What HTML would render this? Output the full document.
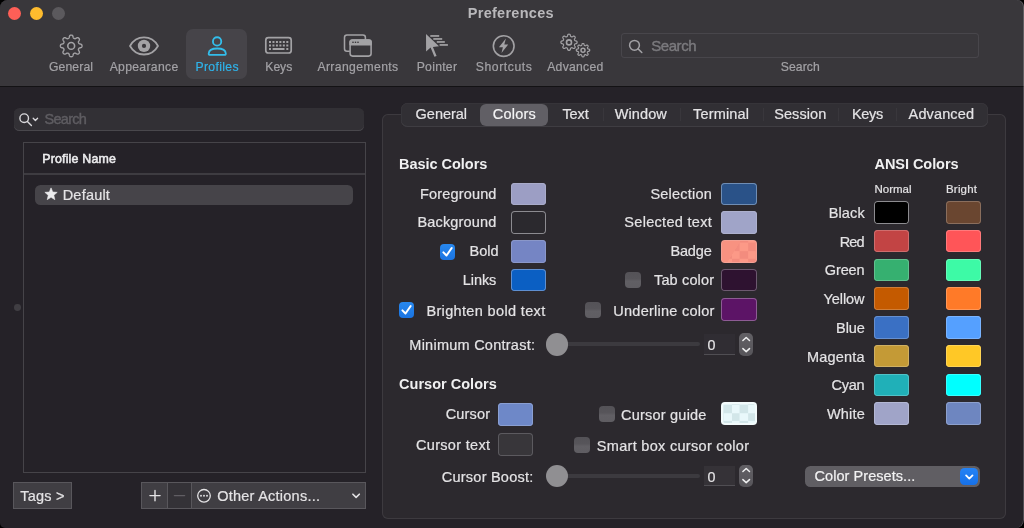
<!DOCTYPE html>
<html lang="en"><head><meta charset="utf-8"><title>Preferences</title>
<style>
html,body{margin:0;padding:0;background:#000;}
body{width:1024px;height:528px;overflow:hidden;position:relative;font-family:"Liberation Sans",sans-serif;}
.abs,.t,.sw,.cb,.bx{position:absolute;}
.t{white-space:pre;-webkit-text-stroke:0.2px currentColor;}
#txt{position:absolute;left:0;top:0;width:1024px;height:528px;will-change:transform;}
#win{position:absolute;left:0;top:0;width:1024px;height:528px;background:#252228;border-radius:7.5px 6.5px 8px 5px;overflow:hidden;}
#win::after{content:"";position:absolute;left:-3px;top:0;right:0;bottom:0;border-radius:7.5px 6.5px 8px 5px;box-shadow:inset -1px 0 0 0 rgba(255,255,255,0.2);pointer-events:none;}
#toolbar{position:absolute;left:0;top:0;width:1024px;height:85.5px;background:#39373b;border-bottom:1.2px solid #131214;}
.sw{border-radius:3.8px;}
.cb{width:15.6px;height:15.6px;border-radius:4px;background:linear-gradient(#545257 0%,#57555a 42%,#615f64 58%,#5f5d62 100%);}
.cb.on{background:linear-gradient(#2888ee,#1a74e2);box-shadow:none;}
.cb svg{display:block}
.knob{width:22.4px;height:22.4px;border-radius:50%;background:#908f92;}
.track{height:4.8px;border-radius:2.4px;background:#3c3a3f;}
.field{background:#302d33;box-shadow:inset 0 -1px 0 #504e53;}
.step{width:14.1px;height:22.2px;border-radius:5px;background:linear-gradient(#626065,#57555a);}
</style></head><body>
<div id="win">
<div id="toolbar"></div>
<div class="bx" style="left:7.8px;top:6.5px;width:13.4px;height:13.4px;border-radius:50%;background:#fe5f57"></div>
<div class="bx" style="left:29.9px;top:6.5px;width:13.4px;height:13.4px;border-radius:50%;background:#febc2e"></div>
<div class="bx" style="left:52px;top:6.5px;width:13.4px;height:13.4px;border-radius:50%;background:#5b595d"></div>
<div class="bx" style="left:186.2px;top:28.6px;width:60.6px;height:50.2px;border-radius:7px;background:#464449"></div>
<div class="bx" style="left:621.4px;top:33.0px;width:358px;height:24.9px;border-radius:3.5px;background:#39373b;box-shadow:inset 0 0 0 1px #48464b"></div>

<svg class="abs" style="left:0;top:0" width="1024" height="90" viewBox="0 0 1024 90" fill="none" stroke="#a3a2a5" stroke-width="1.55" stroke-linejoin="round" stroke-linecap="round">
  <!-- general gear -->
  <path d="M82.00,45.90 L81.99,46.09 L81.98,46.28 L81.95,46.46 L81.90,46.65 L81.84,46.83 L81.74,47.01 L81.61,47.18 L81.42,47.34 L81.17,47.48 L80.86,47.60 L80.51,47.71 L80.15,47.80 L79.81,47.89 L79.53,47.98 L79.31,48.07 L79.13,48.17 L79.00,48.28 L78.90,48.40 L78.81,48.52 L78.74,48.64 L78.68,48.77 L78.62,48.90 L78.56,49.03 L78.52,49.16 L78.47,49.29 L78.44,49.43 L78.41,49.57 L78.40,49.73 L78.42,49.90 L78.47,50.10 L78.56,50.32 L78.70,50.58 L78.87,50.88 L79.06,51.20 L79.24,51.53 L79.37,51.83 L79.44,52.11 L79.46,52.35 L79.44,52.57 L79.38,52.76 L79.30,52.94 L79.20,53.10 L79.09,53.26 L78.97,53.40 L78.84,53.54 L78.70,53.67 L78.56,53.79 L78.40,53.90 L78.24,54.00 L78.06,54.08 L77.87,54.14 L77.65,54.16 L77.41,54.14 L77.13,54.07 L76.83,53.94 L76.50,53.76 L76.18,53.57 L75.88,53.40 L75.62,53.26 L75.40,53.17 L75.20,53.12 L75.03,53.10 L74.87,53.11 L74.73,53.14 L74.59,53.17 L74.46,53.22 L74.33,53.26 L74.20,53.32 L74.07,53.38 L73.94,53.44 L73.82,53.51 L73.70,53.60 L73.58,53.70 L73.47,53.83 L73.37,54.01 L73.28,54.23 L73.19,54.51 L73.10,54.85 L73.01,55.21 L72.90,55.56 L72.78,55.87 L72.64,56.12 L72.48,56.31 L72.31,56.44 L72.13,56.54 L71.95,56.60 L71.76,56.65 L71.58,56.68 L71.39,56.69 L71.20,56.70 L71.01,56.69 L70.82,56.68 L70.64,56.65 L70.45,56.60 L70.27,56.54 L70.09,56.44 L69.92,56.31 L69.76,56.12 L69.62,55.87 L69.50,55.56 L69.39,55.21 L69.30,54.85 L69.21,54.51 L69.12,54.23 L69.03,54.01 L68.93,53.83 L68.82,53.70 L68.70,53.60 L68.58,53.51 L68.46,53.44 L68.33,53.38 L68.20,53.32 L68.07,53.26 L67.94,53.22 L67.81,53.17 L67.67,53.14 L67.53,53.11 L67.37,53.10 L67.20,53.12 L67.00,53.17 L66.78,53.26 L66.52,53.40 L66.22,53.57 L65.90,53.76 L65.57,53.94 L65.27,54.07 L64.99,54.14 L64.75,54.16 L64.53,54.14 L64.34,54.08 L64.16,54.00 L64.00,53.90 L63.84,53.79 L63.70,53.67 L63.56,53.54 L63.43,53.40 L63.31,53.26 L63.20,53.10 L63.10,52.94 L63.02,52.76 L62.96,52.57 L62.94,52.35 L62.96,52.11 L63.03,51.83 L63.16,51.53 L63.34,51.20 L63.53,50.88 L63.70,50.58 L63.84,50.32 L63.93,50.10 L63.98,49.90 L64.00,49.73 L63.99,49.57 L63.96,49.43 L63.93,49.29 L63.88,49.16 L63.84,49.03 L63.78,48.90 L63.72,48.77 L63.66,48.64 L63.59,48.52 L63.50,48.40 L63.40,48.28 L63.27,48.17 L63.09,48.07 L62.87,47.98 L62.59,47.89 L62.25,47.80 L61.89,47.71 L61.54,47.60 L61.23,47.48 L60.98,47.34 L60.79,47.18 L60.66,47.01 L60.56,46.83 L60.50,46.65 L60.45,46.46 L60.42,46.28 L60.41,46.09 L60.40,45.90 L60.41,45.71 L60.42,45.52 L60.45,45.34 L60.50,45.15 L60.56,44.97 L60.66,44.79 L60.79,44.62 L60.98,44.46 L61.23,44.32 L61.54,44.20 L61.89,44.09 L62.25,44.00 L62.59,43.91 L62.87,43.82 L63.09,43.73 L63.27,43.63 L63.40,43.52 L63.50,43.40 L63.59,43.28 L63.66,43.16 L63.72,43.03 L63.78,42.90 L63.84,42.77 L63.88,42.64 L63.93,42.51 L63.96,42.37 L63.99,42.23 L64.00,42.07 L63.98,41.90 L63.93,41.70 L63.84,41.48 L63.70,41.22 L63.53,40.92 L63.34,40.60 L63.16,40.27 L63.03,39.97 L62.96,39.69 L62.94,39.45 L62.96,39.23 L63.02,39.04 L63.10,38.86 L63.20,38.70 L63.31,38.54 L63.43,38.40 L63.56,38.26 L63.70,38.13 L63.84,38.01 L64.00,37.90 L64.16,37.80 L64.34,37.72 L64.53,37.66 L64.75,37.64 L64.99,37.66 L65.27,37.73 L65.57,37.86 L65.90,38.04 L66.22,38.23 L66.52,38.40 L66.78,38.54 L67.00,38.63 L67.20,38.68 L67.37,38.70 L67.53,38.69 L67.67,38.66 L67.81,38.63 L67.94,38.58 L68.07,38.54 L68.20,38.48 L68.33,38.42 L68.46,38.36 L68.58,38.29 L68.70,38.20 L68.82,38.10 L68.93,37.97 L69.03,37.79 L69.12,37.57 L69.21,37.29 L69.30,36.95 L69.39,36.59 L69.50,36.24 L69.62,35.93 L69.76,35.68 L69.92,35.49 L70.09,35.36 L70.27,35.26 L70.45,35.20 L70.64,35.15 L70.82,35.12 L71.01,35.11 L71.20,35.10 L71.39,35.11 L71.58,35.12 L71.76,35.15 L71.95,35.20 L72.13,35.26 L72.31,35.36 L72.48,35.49 L72.64,35.68 L72.78,35.93 L72.90,36.24 L73.01,36.59 L73.10,36.95 L73.19,37.29 L73.28,37.57 L73.37,37.79 L73.47,37.97 L73.58,38.10 L73.70,38.20 L73.82,38.29 L73.94,38.36 L74.07,38.42 L74.20,38.48 L74.33,38.54 L74.46,38.58 L74.59,38.63 L74.73,38.66 L74.87,38.69 L75.03,38.70 L75.20,38.68 L75.40,38.63 L75.62,38.54 L75.88,38.40 L76.18,38.23 L76.50,38.04 L76.83,37.86 L77.13,37.73 L77.41,37.66 L77.65,37.64 L77.87,37.66 L78.06,37.72 L78.24,37.80 L78.40,37.90 L78.56,38.01 L78.70,38.13 L78.84,38.26 L78.97,38.40 L79.09,38.54 L79.20,38.70 L79.30,38.86 L79.38,39.04 L79.44,39.23 L79.46,39.45 L79.44,39.69 L79.37,39.97 L79.24,40.27 L79.06,40.60 L78.87,40.92 L78.70,41.22 L78.56,41.48 L78.47,41.70 L78.42,41.90 L78.40,42.07 L78.41,42.23 L78.44,42.37 L78.47,42.51 L78.52,42.64 L78.56,42.77 L78.62,42.90 L78.68,43.03 L78.74,43.16 L78.81,43.28 L78.90,43.40 L79.00,43.52 L79.13,43.63 L79.31,43.73 L79.53,43.82 L79.81,43.91 L80.15,44.00 L80.51,44.09 L80.86,44.20 L81.17,44.32 L81.42,44.46 L81.61,44.62 L81.74,44.79 L81.84,44.97 L81.90,45.15 L81.95,45.34 L81.98,45.52 L81.99,45.71Z" stroke-width="1.4"/>
  <circle cx="71.2" cy="45.9" r="3.4" stroke-width="1.6"/>
  <!-- eye -->
  <path d="M130 45.95 C133 40.6 138.4 37.4 144 37.4 C149.6 37.4 155 40.6 158 45.95 C155 51.3 149.6 54.5 144 54.5 C138.4 54.5 133 51.3 130 45.95Z" stroke-width="1.8"/>
  <circle cx="144" cy="45.9" r="6.2" fill="#a3a2a5" stroke="none"/>
  <circle cx="144" cy="45.9" r="2.1" fill="#39373b" stroke="none"/>
  <!-- person -->
  <g stroke="#33bdea" stroke-width="1.85">
    <circle cx="217.1" cy="41.4" r="4.15"/>
    <path d="M208.7 53.5 C208.9 50.4 212.5 48.5 217.25 48.5 C222 48.5 225.6 50.4 225.8 53.5 C225.85 54.4 225.4 54.9 224.5 54.9 L210 54.9 C209.1 54.9 208.65 54.4 208.7 53.5Z"/>
  </g>
  <!-- keyboard -->
  <rect x="265.8" y="37.6" width="25.4" height="15.4" rx="2.6" stroke-width="1.7"/>
  <g fill="#a3a2a5" stroke="none">
    <rect x="269.00" y="41.0" width="2" height="2"/><rect x="272.46" y="41.0" width="2" height="2"/><rect x="275.92" y="41.0" width="2" height="2"/><rect x="279.38" y="41.0" width="2" height="2"/><rect x="282.84" y="41.0" width="2" height="2"/><rect x="286.30" y="41.0" width="2" height="2"/>
    <rect x="269.00" y="44.5" width="2" height="2"/><rect x="272.46" y="44.5" width="2" height="2"/><rect x="275.92" y="44.5" width="2" height="2"/><rect x="279.38" y="44.5" width="2" height="2"/><rect x="282.84" y="44.5" width="2" height="2"/><rect x="286.30" y="44.5" width="2" height="2"/>
    <rect x="269.0" y="48.0" width="2" height="2"/><rect x="272.6" y="48.0" width="11.9" height="2"/><rect x="286.3" y="48.0" width="2" height="2"/>
  </g>
  <!-- arrangements -->
  <path d="M349.3 51.3 L347 51.3 C345.4 51.3 344.5 50.4 344.5 48.8 L344.5 37.4 C344.5 35.8 345.4 34.9 347 34.9 L362.9 34.9 C364.5 34.9 365.4 35.8 365.4 37.4 L365.4 39.3"/>
  <rect x="350.1" y="40.0" width="21" height="16.1" rx="2.5"/>
  <path d="M350.1 44.6 L350.1 42.5 C350.1 40.9 351 40 352.6 40 L368.6 40 C370.2 40 371.1 40.9 371.1 42.5 L371.1 44.6Z" fill="#a3a2a5"/>
  <g fill="#39373b" stroke="none"><rect x="352.3" y="41.6" width="1.4" height="1.4"/><rect x="354.8" y="41.6" width="1.4" height="1.4"/><rect x="357.3" y="41.6" width="1.4" height="1.4"/></g>
  <!-- pointer -->
  <g fill="#a3a2a5" stroke="none">
    <path d="M426.0 33.9 L426.1 51.4 L430.6 47.6 L434.4 56.8 L436.6 55.9 L432.9 46.9 L439.0 46.3 Z"/>
    <rect x="430.3" y="35.1" width="8.9" height="1.7"/>
    <rect x="433.3" y="38.1" width="8.9" height="1.7"/>
    <rect x="436.8" y="41.1" width="8.0" height="1.7"/>
    <rect x="439.6" y="44.1" width="8.3" height="1.7"/>
  </g>
  <!-- shortcuts -->
  <circle cx="503.7" cy="46.05" r="10.35" stroke-width="1.6"/>
  <path d="M505.9 38.5 L498.9 47.3 L502.9 47.3 L501.5 53.0 L508.2 44.5 L504.3 44.5 Z" fill="#a3a2a5" stroke="none"/>
  <!-- advanced gears -->
  <g stroke-width="1.2">
  <path d="M577.10,42.30 L577.10,42.44 L577.08,42.58 L577.06,42.72 L577.03,42.86 L576.98,43.00 L576.91,43.13 L576.80,43.26 L576.66,43.38 L576.48,43.48 L576.25,43.58 L575.98,43.66 L575.71,43.73 L575.46,43.79 L575.25,43.86 L575.08,43.93 L574.95,44.01 L574.85,44.09 L574.77,44.18 L574.71,44.27 L574.66,44.36 L574.61,44.45 L574.56,44.55 L574.52,44.64 L574.49,44.74 L574.45,44.84 L574.43,44.95 L574.41,45.06 L574.40,45.17 L574.41,45.30 L574.45,45.45 L574.52,45.62 L574.62,45.81 L574.75,46.04 L574.90,46.28 L575.03,46.52 L575.13,46.75 L575.18,46.96 L575.20,47.14 L575.18,47.30 L575.13,47.45 L575.07,47.58 L575.00,47.70 L574.92,47.82 L574.82,47.92 L574.73,48.03 L574.62,48.12 L574.52,48.22 L574.40,48.30 L574.28,48.37 L574.15,48.43 L574.00,48.48 L573.84,48.50 L573.66,48.48 L573.45,48.43 L573.22,48.33 L572.98,48.20 L572.74,48.05 L572.51,47.92 L572.32,47.82 L572.15,47.75 L572.00,47.71 L571.87,47.70 L571.76,47.71 L571.65,47.73 L571.54,47.75 L571.44,47.79 L571.34,47.82 L571.25,47.86 L571.15,47.91 L571.06,47.96 L570.97,48.01 L570.88,48.07 L570.79,48.15 L570.71,48.25 L570.63,48.38 L570.56,48.55 L570.49,48.76 L570.43,49.01 L570.36,49.28 L570.28,49.55 L570.18,49.78 L570.08,49.96 L569.96,50.10 L569.83,50.21 L569.70,50.28 L569.56,50.33 L569.42,50.36 L569.28,50.38 L569.14,50.40 L569.00,50.40 L568.86,50.40 L568.72,50.38 L568.58,50.36 L568.44,50.33 L568.30,50.28 L568.17,50.21 L568.04,50.10 L567.92,49.96 L567.82,49.78 L567.72,49.55 L567.64,49.28 L567.57,49.01 L567.51,48.76 L567.44,48.55 L567.37,48.38 L567.29,48.25 L567.21,48.15 L567.12,48.07 L567.03,48.01 L566.94,47.96 L566.85,47.91 L566.75,47.86 L566.66,47.82 L566.56,47.79 L566.46,47.75 L566.35,47.73 L566.24,47.71 L566.13,47.70 L566.00,47.71 L565.85,47.75 L565.68,47.82 L565.49,47.92 L565.26,48.05 L565.02,48.20 L564.78,48.33 L564.55,48.43 L564.34,48.48 L564.16,48.50 L564.00,48.48 L563.85,48.43 L563.72,48.37 L563.60,48.30 L563.48,48.22 L563.38,48.12 L563.27,48.03 L563.18,47.92 L563.08,47.82 L563.00,47.70 L562.93,47.58 L562.87,47.45 L562.82,47.30 L562.80,47.14 L562.82,46.96 L562.87,46.75 L562.97,46.52 L563.10,46.28 L563.25,46.04 L563.38,45.81 L563.48,45.62 L563.55,45.45 L563.59,45.30 L563.60,45.17 L563.59,45.06 L563.57,44.95 L563.55,44.84 L563.51,44.74 L563.48,44.64 L563.44,44.55 L563.39,44.45 L563.34,44.36 L563.29,44.27 L563.23,44.18 L563.15,44.09 L563.05,44.01 L562.92,43.93 L562.75,43.86 L562.54,43.79 L562.29,43.73 L562.02,43.66 L561.75,43.58 L561.52,43.48 L561.34,43.38 L561.20,43.26 L561.09,43.13 L561.02,43.00 L560.97,42.86 L560.94,42.72 L560.92,42.58 L560.90,42.44 L560.90,42.30 L560.90,42.16 L560.92,42.02 L560.94,41.88 L560.97,41.74 L561.02,41.60 L561.09,41.47 L561.20,41.34 L561.34,41.22 L561.52,41.12 L561.75,41.02 L562.02,40.94 L562.29,40.87 L562.54,40.81 L562.75,40.74 L562.92,40.67 L563.05,40.59 L563.15,40.51 L563.23,40.42 L563.29,40.33 L563.34,40.24 L563.39,40.15 L563.44,40.05 L563.48,39.96 L563.51,39.86 L563.55,39.76 L563.57,39.65 L563.59,39.54 L563.60,39.43 L563.59,39.30 L563.55,39.15 L563.48,38.98 L563.38,38.79 L563.25,38.56 L563.10,38.32 L562.97,38.08 L562.87,37.85 L562.82,37.64 L562.80,37.46 L562.82,37.30 L562.87,37.15 L562.93,37.02 L563.00,36.90 L563.08,36.78 L563.18,36.68 L563.27,36.57 L563.38,36.48 L563.48,36.38 L563.60,36.30 L563.72,36.23 L563.85,36.17 L564.00,36.12 L564.16,36.10 L564.34,36.12 L564.55,36.17 L564.78,36.27 L565.02,36.40 L565.26,36.55 L565.49,36.68 L565.68,36.78 L565.85,36.85 L566.00,36.89 L566.13,36.90 L566.24,36.89 L566.35,36.87 L566.46,36.85 L566.56,36.81 L566.66,36.78 L566.75,36.74 L566.85,36.69 L566.94,36.64 L567.03,36.59 L567.12,36.53 L567.21,36.45 L567.29,36.35 L567.37,36.22 L567.44,36.05 L567.51,35.84 L567.57,35.59 L567.64,35.32 L567.72,35.05 L567.82,34.82 L567.92,34.64 L568.04,34.50 L568.17,34.39 L568.30,34.32 L568.44,34.27 L568.58,34.24 L568.72,34.22 L568.86,34.20 L569.00,34.20 L569.14,34.20 L569.28,34.22 L569.42,34.24 L569.56,34.27 L569.70,34.32 L569.83,34.39 L569.96,34.50 L570.08,34.64 L570.18,34.82 L570.28,35.05 L570.36,35.32 L570.43,35.59 L570.49,35.84 L570.56,36.05 L570.63,36.22 L570.71,36.35 L570.79,36.45 L570.88,36.53 L570.97,36.59 L571.06,36.64 L571.15,36.69 L571.25,36.74 L571.34,36.78 L571.44,36.81 L571.54,36.85 L571.65,36.87 L571.76,36.89 L571.87,36.90 L572.00,36.89 L572.15,36.85 L572.32,36.78 L572.51,36.68 L572.74,36.55 L572.98,36.40 L573.22,36.27 L573.45,36.17 L573.66,36.12 L573.84,36.10 L574.00,36.12 L574.15,36.17 L574.28,36.23 L574.40,36.30 L574.52,36.38 L574.62,36.48 L574.73,36.57 L574.82,36.68 L574.92,36.78 L575.00,36.90 L575.07,37.02 L575.13,37.15 L575.18,37.30 L575.20,37.46 L575.18,37.64 L575.13,37.85 L575.03,38.08 L574.90,38.32 L574.75,38.56 L574.62,38.79 L574.52,38.98 L574.45,39.15 L574.41,39.30 L574.40,39.43 L574.41,39.54 L574.43,39.65 L574.45,39.76 L574.49,39.86 L574.52,39.96 L574.56,40.05 L574.61,40.15 L574.66,40.24 L574.71,40.33 L574.77,40.42 L574.85,40.51 L574.95,40.59 L575.08,40.67 L575.25,40.74 L575.46,40.81 L575.71,40.87 L575.98,40.94 L576.25,41.02 L576.48,41.12 L576.66,41.22 L576.80,41.34 L576.91,41.47 L576.98,41.60 L577.03,41.74 L577.06,41.88 L577.08,42.02 L577.10,42.16Z"/><circle cx="569" cy="42.4" r="2.5" stroke-width="1.6"/>
  <path d="M589.70,50.20 L589.70,50.32 L589.69,50.43 L589.67,50.55 L589.64,50.66 L589.60,50.78 L589.54,50.89 L589.45,50.99 L589.33,51.09 L589.17,51.18 L588.97,51.25 L588.75,51.32 L588.51,51.37 L588.30,51.42 L588.12,51.48 L587.98,51.53 L587.87,51.60 L587.78,51.66 L587.72,51.73 L587.66,51.81 L587.62,51.88 L587.58,51.96 L587.54,52.04 L587.51,52.11 L587.48,52.20 L587.45,52.28 L587.43,52.36 L587.42,52.45 L587.42,52.55 L587.43,52.65 L587.46,52.78 L587.52,52.92 L587.61,53.08 L587.73,53.27 L587.85,53.47 L587.97,53.68 L588.05,53.87 L588.10,54.05 L588.12,54.20 L588.11,54.34 L588.07,54.46 L588.02,54.57 L587.96,54.67 L587.89,54.76 L587.82,54.85 L587.74,54.94 L587.65,55.02 L587.56,55.09 L587.47,55.16 L587.37,55.22 L587.26,55.27 L587.14,55.31 L587.00,55.32 L586.85,55.30 L586.67,55.25 L586.48,55.17 L586.27,55.05 L586.07,54.93 L585.88,54.81 L585.72,54.72 L585.58,54.66 L585.45,54.63 L585.35,54.62 L585.25,54.62 L585.16,54.63 L585.08,54.65 L585.00,54.68 L584.91,54.71 L584.84,54.74 L584.76,54.78 L584.68,54.82 L584.61,54.86 L584.53,54.92 L584.46,54.98 L584.40,55.07 L584.33,55.18 L584.28,55.32 L584.22,55.50 L584.17,55.71 L584.12,55.95 L584.05,56.17 L583.98,56.37 L583.89,56.53 L583.79,56.65 L583.69,56.74 L583.58,56.80 L583.46,56.84 L583.35,56.87 L583.23,56.89 L583.12,56.90 L583.00,56.90 L582.88,56.90 L582.77,56.89 L582.65,56.87 L582.54,56.84 L582.42,56.80 L582.31,56.74 L582.21,56.65 L582.11,56.53 L582.02,56.37 L581.95,56.17 L581.88,55.95 L581.83,55.71 L581.78,55.50 L581.72,55.32 L581.67,55.18 L581.60,55.07 L581.54,54.98 L581.47,54.92 L581.39,54.86 L581.32,54.82 L581.24,54.78 L581.16,54.74 L581.09,54.71 L581.00,54.68 L580.92,54.65 L580.84,54.63 L580.75,54.62 L580.65,54.62 L580.55,54.63 L580.42,54.66 L580.28,54.72 L580.12,54.81 L579.93,54.93 L579.73,55.05 L579.52,55.17 L579.33,55.25 L579.15,55.30 L579.00,55.32 L578.86,55.31 L578.74,55.27 L578.63,55.22 L578.53,55.16 L578.44,55.09 L578.35,55.02 L578.26,54.94 L578.18,54.85 L578.11,54.76 L578.04,54.67 L577.98,54.57 L577.93,54.46 L577.89,54.34 L577.88,54.20 L577.90,54.05 L577.95,53.87 L578.03,53.68 L578.15,53.47 L578.27,53.27 L578.39,53.08 L578.48,52.92 L578.54,52.78 L578.57,52.65 L578.58,52.55 L578.58,52.45 L578.57,52.36 L578.55,52.28 L578.52,52.20 L578.49,52.11 L578.46,52.04 L578.42,51.96 L578.38,51.88 L578.34,51.81 L578.28,51.73 L578.22,51.66 L578.13,51.60 L578.02,51.53 L577.88,51.48 L577.70,51.42 L577.49,51.37 L577.25,51.32 L577.03,51.25 L576.83,51.18 L576.67,51.09 L576.55,50.99 L576.46,50.89 L576.40,50.78 L576.36,50.66 L576.33,50.55 L576.31,50.43 L576.30,50.32 L576.30,50.20 L576.30,50.08 L576.31,49.97 L576.33,49.85 L576.36,49.74 L576.40,49.62 L576.46,49.51 L576.55,49.41 L576.67,49.31 L576.83,49.22 L577.03,49.15 L577.25,49.08 L577.49,49.03 L577.70,48.98 L577.88,48.92 L578.02,48.87 L578.13,48.80 L578.22,48.74 L578.28,48.67 L578.34,48.59 L578.38,48.52 L578.42,48.44 L578.46,48.36 L578.49,48.29 L578.52,48.20 L578.55,48.12 L578.57,48.04 L578.58,47.95 L578.58,47.85 L578.57,47.75 L578.54,47.62 L578.48,47.48 L578.39,47.32 L578.27,47.13 L578.15,46.93 L578.03,46.72 L577.95,46.53 L577.90,46.35 L577.88,46.20 L577.89,46.06 L577.93,45.94 L577.98,45.83 L578.04,45.73 L578.11,45.64 L578.18,45.55 L578.26,45.46 L578.35,45.38 L578.44,45.31 L578.53,45.24 L578.63,45.18 L578.74,45.13 L578.86,45.09 L579.00,45.08 L579.15,45.10 L579.33,45.15 L579.52,45.23 L579.73,45.35 L579.93,45.47 L580.12,45.59 L580.28,45.68 L580.42,45.74 L580.55,45.77 L580.65,45.78 L580.75,45.78 L580.84,45.77 L580.92,45.75 L581.00,45.72 L581.09,45.69 L581.16,45.66 L581.24,45.62 L581.32,45.58 L581.39,45.54 L581.47,45.48 L581.54,45.42 L581.60,45.33 L581.67,45.22 L581.72,45.08 L581.78,44.90 L581.83,44.69 L581.88,44.45 L581.95,44.23 L582.02,44.03 L582.11,43.87 L582.21,43.75 L582.31,43.66 L582.42,43.60 L582.54,43.56 L582.65,43.53 L582.77,43.51 L582.88,43.50 L583.00,43.50 L583.12,43.50 L583.23,43.51 L583.35,43.53 L583.46,43.56 L583.58,43.60 L583.69,43.66 L583.79,43.75 L583.89,43.87 L583.98,44.03 L584.05,44.23 L584.12,44.45 L584.17,44.69 L584.22,44.90 L584.28,45.08 L584.33,45.22 L584.40,45.33 L584.46,45.42 L584.53,45.48 L584.61,45.54 L584.68,45.58 L584.76,45.62 L584.84,45.66 L584.91,45.69 L585.00,45.72 L585.08,45.75 L585.16,45.77 L585.25,45.78 L585.35,45.78 L585.45,45.77 L585.58,45.74 L585.72,45.68 L585.88,45.59 L586.07,45.47 L586.27,45.35 L586.48,45.23 L586.67,45.15 L586.85,45.10 L587.00,45.08 L587.14,45.09 L587.26,45.13 L587.37,45.18 L587.47,45.24 L587.56,45.31 L587.65,45.38 L587.74,45.46 L587.82,45.55 L587.89,45.64 L587.96,45.73 L588.02,45.83 L588.07,45.94 L588.11,46.06 L588.12,46.20 L588.10,46.35 L588.05,46.53 L587.97,46.72 L587.85,46.93 L587.73,47.13 L587.61,47.32 L587.52,47.48 L587.46,47.62 L587.43,47.75 L587.42,47.85 L587.42,47.95 L587.43,48.04 L587.45,48.12 L587.48,48.20 L587.51,48.29 L587.54,48.36 L587.58,48.44 L587.62,48.52 L587.66,48.59 L587.72,48.67 L587.78,48.74 L587.87,48.80 L587.98,48.87 L588.12,48.92 L588.30,48.98 L588.51,49.03 L588.75,49.08 L588.97,49.15 L589.17,49.22 L589.33,49.31 L589.45,49.41 L589.54,49.51 L589.60,49.62 L589.64,49.74 L589.67,49.85 L589.69,49.97 L589.70,50.08Z"/><circle cx="583" cy="50.3" r="2.0" stroke-width="1.5"/>
  </g>
  <!-- toolbar search magnifier -->
  <g stroke="#a2a1a5" stroke-width="1.5"><circle cx="634.5" cy="45.3" r="4.9"/><path d="M638.1 48.9 L641.8 52.5"/></g>
</svg>

<!-- left pane -->
<div class="bx" style="left:14.2px;top:108.3px;width:350.2px;height:22.6px;border-radius:5.5px;background:#323035;box-shadow:inset 0 -1px 0 #49474c"></div>
<svg class="abs" style="left:14px;top:106.4px" width="30" height="26" viewBox="0 0 30 26" fill="none" stroke="#d9d8db" stroke-width="1.4" stroke-linecap="round" stroke-linejoin="round"><circle cx="10.2" cy="12.2" r="4.3"/><path d="M13.4 15.6 L17.4 19.6"/><path d="M19.2 12.3 L21.4 14.5 L23.6 12.3" stroke-width="1.3"/></svg>
<div class="bx" style="left:22.9px;top:142.2px;width:343.2px;height:330.9px;box-sizing:border-box;border:1.6px solid #464449;background:#252228"></div>
<div class="bx" style="left:24.4px;top:173.2px;width:340.2px;height:1.4px;background:#3e3c41"></div>
<div class="bx" style="left:35.2px;top:185.0px;width:318px;height:20.2px;border-radius:5.5px;background:#464449"></div>
<svg class="abs" style="left:44.2px;top:187.2px" width="15" height="15" viewBox="0 0 16 16"><path d="M7.5 0.9 L9.35 5.3 L14.1 5.7 L10.5 8.85 L11.6 13.5 L7.5 11.0 L3.4 13.5 L4.5 8.85 L0.9 5.7 L5.65 5.3 Z" fill="#ececee" stroke="#ececee" stroke-width="0.6" stroke-linejoin="round"/></svg>
<div class="bx" style="left:14.4px;top:304.3px;width:6.8px;height:6.8px;border-radius:50%;background:#403e43"></div>

<!-- bottom buttons -->
<div class="bx" style="left:13px;top:481.6px;width:59px;height:27.4px;background:#403e43;box-shadow:inset 0 0 0 1px #59575c"></div>
<div class="bx" style="left:141.4px;top:481.6px;width:224.2px;height:27.4px;background:#403e43;box-shadow:inset 0 0 0 1px #59575c"></div>
<div class="bx" style="left:167.4px;top:482.6px;width:25px;height:25.4px;background:#343237;border-left:1px solid #59575c;border-right:1px solid #59575c;box-sizing:border-box"></div>
<svg class="abs" style="left:141px;top:481px" width="226" height="29" viewBox="0 0 226 29" fill="none" stroke="#e4e3e5" stroke-width="1.4" stroke-linecap="round" stroke-linejoin="round">
  <path d="M8.9 14.6 L19.1 14.6 M14 9.5 L14 19.7"/>
  <path d="M33.4 14.6 L43.6 14.6" stroke="#605e63"/>
  <circle cx="63" cy="14.8" r="6.3" stroke-width="1.3"/>
  <g fill="#e4e3e5" stroke="none"><circle cx="60" cy="14.8" r="0.95"/><circle cx="63" cy="14.8" r="0.95"/><circle cx="66" cy="14.8" r="0.95"/></g>
  <path d="M211.9 13.2 L215.1 16.4 L218.3 13.2" stroke-width="1.6"/>
</svg>

<!-- right panel -->
<div class="bx" style="left:382.4px;top:114.2px;width:623.6px;height:404.7px;border-radius:6px;background:#2c292e;box-shadow:inset 0 0 0 1px #3d3a3f"></div>
<div class="bx" style="left:401px;top:103px;width:587.4px;height:23.7px;border-radius:6.5px;background:#312f34;box-shadow:inset 0 0 0 0.6px #3c3a3f, inset 0 -1px 0 #434146"></div>
<div class="bx" style="left:480.3px;top:103.5px;width:67.4px;height:22.9px;border-radius:6px;background:#615f65"></div>
<div class="bx" style="left:603.2px;top:107.5px;width:1px;height:13px;background:#39373c"></div><div class="bx" style="left:679.5px;top:107.5px;width:1px;height:13px;background:#39373c"></div><div class="bx" style="left:762.5px;top:107.5px;width:1px;height:13px;background:#39373c"></div><div class="bx" style="left:838px;top:107.5px;width:1px;height:13px;background:#39373c"></div><div class="bx" style="left:896px;top:107.5px;width:1px;height:13px;background:#39373c"></div>

<div class="sw" style="left:510.5px;top:182.6px;width:35.2px;height:22.6px;background:#9c9ec4;box-shadow:inset 0 0 0 1px #a9abc9;"></div><div class="sw" style="left:510.5px;top:211.4px;width:35.2px;height:22.6px;background:#2b292e;box-shadow:inset 0 0 0 1px #8c8b90;"></div><div class="sw" style="left:510.5px;top:240.2px;width:35.2px;height:22.6px;background:#7585c4;box-shadow:inset 0 0 0 1px #8a97c9;"></div><div class="sw" style="left:510.5px;top:268.9px;width:35.2px;height:22.6px;background:#0b5fc3;box-shadow:inset 0 0 0 1px #5f8fd0;"></div><div class="sw" style="left:721.4px;top:182.6px;width:35.2px;height:22.6px;background:#2a5288;box-shadow:inset 0 0 0 1px #6f8db4;"></div><div class="sw" style="left:721.4px;top:211.4px;width:35.2px;height:22.6px;background:#a0a4c8;box-shadow:inset 0 0 0 1px #adb0cd;"></div><div class="sw" style="left:721.4px;top:240.2px;width:35.2px;height:22.6px;background:#f28f7f;box-shadow:inset 0 0 0 1px #f3a194;background-image:linear-gradient(122deg,#f89281 0 40%,rgba(248,146,129,0) 40.5%),conic-gradient(#f38c7e 25%,#fc9987 0 50%,#f38c7e 0 75%,#fc9987 0);background-size:100% 100%,16.2px 16.2px;background-position:0 0,2.4px 2.6px;"></div><div class="sw" style="left:721.4px;top:268.9px;width:35.2px;height:22.6px;background:#2e1230;box-shadow:inset 0 0 0 1px #6d5a70;"></div><div class="sw" style="left:721.4px;top:298.4px;width:35.2px;height:22.6px;background:#5c1466;box-shadow:inset 0 0 0 1px #8d5c94;"></div><div class="sw" style="left:498.3px;top:403.1px;width:35.2px;height:22.6px;background:#6e88c8;box-shadow:inset 0 0 0 1px #8a9fd2;"></div><div class="sw" style="left:498.3px;top:433.1px;width:35.2px;height:22.6px;background:#38363a;box-shadow:inset 0 0 0 1px #5c5a5f;"></div><div class="sw" style="left:721.4px;top:402.3px;width:35.2px;height:22.9px;background:#e3f5f7;box-shadow:inset 0 0 0 2px #f3fbfc;background-image:conic-gradient(#e9f8fb 25%,#d2e6e9 0 50%,#e9f8fb 0 75%,#d2e6e9 0);background-size:16.2px 16.2px;background-position:2.4px 2.7px;"></div><div class="sw" style="left:873.8px;top:201.2px;width:35.2px;height:22.6px;background:#000000;box-shadow:inset 0 0 0 1px #8d8c90;"></div><div class="sw" style="left:945.7px;top:201.2px;width:35.2px;height:22.6px;background:#6a4630;box-shadow:inset 0 0 0 1px #8a6e5d;"></div><div class="sw" style="left:873.8px;top:229.9px;width:35.2px;height:22.6px;background:#c24444;box-shadow:inset 0 0 0 1px #cf6d6d;"></div><div class="sw" style="left:945.7px;top:229.9px;width:35.2px;height:22.6px;background:#ff5558;box-shadow:inset 0 0 0 1px #ff7a7c;"></div><div class="sw" style="left:873.8px;top:258.7px;width:35.2px;height:22.6px;background:#36b070;box-shadow:inset 0 0 0 1px #62c18f;"></div><div class="sw" style="left:945.7px;top:258.7px;width:35.2px;height:22.6px;background:#3dfaa6;box-shadow:inset 0 0 0 1px #67fbb9;"></div><div class="sw" style="left:873.8px;top:287.4px;width:35.2px;height:22.6px;background:#c45a00;box-shadow:inset 0 0 0 1px #d07e38;"></div><div class="sw" style="left:945.7px;top:287.4px;width:35.2px;height:22.6px;background:#ff7a28;box-shadow:inset 0 0 0 1px #ff9757;"></div><div class="sw" style="left:873.8px;top:316.1px;width:35.2px;height:22.6px;background:#3a70c4;box-shadow:inset 0 0 0 1px #658fd0;"></div><div class="sw" style="left:945.7px;top:316.1px;width:35.2px;height:22.6px;background:#55a0ff;box-shadow:inset 0 0 0 1px #7ab4ff;"></div><div class="sw" style="left:873.8px;top:344.9px;width:35.2px;height:22.6px;background:#c49a36;box-shadow:inset 0 0 0 1px #d0b062;"></div><div class="sw" style="left:945.7px;top:344.9px;width:35.2px;height:22.6px;background:#ffc826;box-shadow:inset 0 0 0 1px #ffd455;"></div><div class="sw" style="left:873.8px;top:373.6px;width:35.2px;height:22.6px;background:#20b0b8;box-shadow:inset 0 0 0 1px #51c1c7;"></div><div class="sw" style="left:945.7px;top:373.6px;width:35.2px;height:22.6px;background:#00ffff;box-shadow:inset 0 0 0 1px #38ffff;"></div><div class="sw" style="left:873.8px;top:402.3px;width:35.2px;height:22.6px;background:#a0a4c8;box-shadow:inset 0 0 0 1px #b4b8d4;"></div><div class="sw" style="left:945.7px;top:402.3px;width:35.2px;height:22.6px;background:#6e86c0;box-shadow:inset 0 0 0 1px #8da0cd;"></div>
<div class="cb on" style="left:439.9px;top:244.0px"><svg width="15.6" height="15.6" viewBox="0 0 15.6 15.6"><path d="M3.4 8.4 L6.5 11.5 L11.7 4.0" fill="none" stroke="#fff" stroke-width="2.0" stroke-linecap="round" stroke-linejoin="round"/></svg></div><div class="cb on" style="left:398.9px;top:302.4px"><svg width="15.6" height="15.6" viewBox="0 0 15.6 15.6"><path d="M3.4 8.4 L6.5 11.5 L11.7 4.0" fill="none" stroke="#fff" stroke-width="2.0" stroke-linecap="round" stroke-linejoin="round"/></svg></div><div class="cb" style="left:624.9px;top:272.4px;width:16px;height:15.9px"></div><div class="cb" style="left:585.2px;top:302.3px;width:16px;height:15.9px"></div><div class="cb" style="left:598.7px;top:406.0px;width:16px;height:15.9px"></div><div class="cb" style="left:574.2px;top:437.3px;width:16px;height:15.9px"></div>

<!-- sliders -->
<div class="bx track" style="left:556px;top:341.5px;width:144px"></div>
<div class="bx knob" style="left:545.6px;top:333.3px"></div>
<div class="bx field" style="left:703.8px;top:334.0px;width:31.4px;height:20.6px"></div>
<div class="bx step" style="left:739.3px;top:333.4px"></div>
<div class="bx track" style="left:556px;top:473.7px;width:144px"></div>
<div class="bx knob" style="left:545.6px;top:464.7px"></div>
<div class="bx field" style="left:703.8px;top:465.8px;width:31.4px;height:20.4px;background:#353237"></div>
<div class="bx step" style="left:739.3px;top:465.1px"></div>
<svg class="abs" style="left:739px;top:333px" width="15" height="24" viewBox="0 0 15 24" fill="none" stroke="#f0f0f1" stroke-width="1.5" stroke-linecap="round" stroke-linejoin="round"><path d="M3.9 7.5 L7.2 4.5 L10.5 7.5 M3.9 15.6 L7.2 18.6 L10.5 15.6"/></svg>
<svg class="abs" style="left:739px;top:464.2px" width="15" height="24" viewBox="0 0 15 24" fill="none" stroke="#f0f0f1" stroke-width="1.5" stroke-linecap="round" stroke-linejoin="round"><path d="M3.9 7.5 L7.2 4.5 L10.5 7.5 M3.9 15.6 L7.2 18.6 L10.5 15.6"/></svg>

<!-- color presets -->
<div class="bx" style="left:804.9px;top:465.8px;width:175.2px;height:21.6px;border-radius:5.5px;background:#605e63"></div>
<div class="bx" style="left:959.8px;top:467.8px;width:18.6px;height:17.6px;border-radius:4.5px;background:linear-gradient(#2583f5,#1670e8)"></div>
<svg class="abs" style="left:959.8px;top:467.8px" width="19" height="18" viewBox="0 0 19 18" fill="none" stroke="#fff" stroke-width="1.8" stroke-linecap="round" stroke-linejoin="round"><path d="M6.1 7.4 L9.3 10.6 L12.5 7.4"/></svg>

<div id="txt"><span class="t" style="left:467.80px;top:3.87px;font-size:14.5px;line-height:19px;color:#b9b8bb;letter-spacing:0.270px;font-weight:bold;-webkit-text-stroke:0;">Preferences</span><span class="t" style="left:49.00px;top:59.34px;font-size:12.2px;line-height:16px;color:#a3a2a6;letter-spacing:0.104px;">General</span><span class="t" style="left:109.70px;top:59.34px;font-size:12.2px;line-height:16px;color:#a3a2a6;letter-spacing:0.306px;">Appearance</span><span class="t" style="left:195.50px;top:59.34px;font-size:12.2px;line-height:16px;color:#2fb3ea;letter-spacing:0.339px;">Profiles</span><span class="t" style="left:265.30px;top:59.34px;font-size:12.2px;line-height:16px;color:#a3a2a6;letter-spacing:-0.042px;">Keys</span><span class="t" style="left:317.40px;top:59.34px;font-size:12.2px;line-height:16px;color:#a3a2a6;letter-spacing:0.385px;">Arrangements</span><span class="t" style="left:416.70px;top:59.34px;font-size:12.2px;line-height:16px;color:#a3a2a6;letter-spacing:0.279px;">Pointer</span><span class="t" style="left:475.70px;top:59.34px;font-size:12.2px;line-height:16px;color:#a3a2a6;letter-spacing:0.588px;">Shortcuts</span><span class="t" style="left:547.20px;top:59.34px;font-size:12.2px;line-height:16px;color:#a3a2a6;letter-spacing:0.273px;">Advanced</span><span class="t" style="left:780.80px;top:59.34px;font-size:12.2px;line-height:16px;color:#a3a2a6;letter-spacing:0.055px;">Search</span><span class="t" style="left:651.20px;top:36.42px;font-size:15px;line-height:20px;color:#7b7a7e;letter-spacing:-0.420px;-webkit-text-stroke:0.4px currentColor;">Search</span><span class="t" style="left:44.50px;top:110.27px;font-size:14.5px;line-height:19px;color:#5f5d62;letter-spacing:-0.708px;-webkit-text-stroke:0.4px currentColor;">Search</span><span class="t" style="left:42.20px;top:151.44px;font-size:12.4px;line-height:16px;color:#ececee;letter-spacing:0.191px;-webkit-text-stroke:0.55px currentColor;">Profile Name</span><span class="t" style="left:62.70px;top:185.77px;font-size:14.5px;line-height:19px;color:#e4e3e5;letter-spacing:0.210px;">Default</span><span class="t" style="left:20.20px;top:486.87px;font-size:14.5px;line-height:19px;color:#e4e3e5;letter-spacing:0.235px;">Tags &gt;</span><span class="t" style="left:217.20px;top:487.17px;font-size:14.5px;line-height:19px;color:#e4e3e5;letter-spacing:0.245px;">Other Actions...</span><span class="t" style="left:415.60px;top:105.07px;font-size:14.5px;line-height:19px;color:#e4e3e5;letter-spacing:-0.027px;">General</span><span class="t" style="left:492.80px;top:105.07px;font-size:14.5px;line-height:19px;color:#f4f4f5;letter-spacing:0.225px;">Colors</span><span class="t" style="left:562.40px;top:105.07px;font-size:14.5px;line-height:19px;color:#e4e3e5;letter-spacing:-0.054px;">Text</span><span class="t" style="left:614.80px;top:105.07px;font-size:14.5px;line-height:19px;color:#e4e3e5;letter-spacing:0.083px;">Window</span><span class="t" style="left:693.00px;top:105.07px;font-size:14.5px;line-height:19px;color:#e4e3e5;letter-spacing:0.170px;">Terminal</span><span class="t" style="left:774.20px;top:105.07px;font-size:14.5px;line-height:19px;color:#e4e3e5;letter-spacing:0.073px;">Session</span><span class="t" style="left:852.00px;top:105.07px;font-size:14.5px;line-height:19px;color:#e4e3e5;letter-spacing:-0.350px;">Keys</span><span class="t" style="left:908.60px;top:105.07px;font-size:14.5px;line-height:19px;color:#e4e3e5;letter-spacing:0.129px;">Advanced</span><span class="t" style="left:399.00px;top:154.77px;font-size:14.5px;line-height:19px;color:#f0f0f1;letter-spacing:-0.030px;font-weight:bold;-webkit-text-stroke:0;">Basic Colors</span><span class="t" style="left:399.00px;top:374.87px;font-size:14.5px;line-height:19px;color:#f0f0f1;letter-spacing:0.025px;font-weight:bold;-webkit-text-stroke:0;">Cursor Colors</span><span class="t" style="left:874.50px;top:154.77px;font-size:14.5px;line-height:19px;color:#f0f0f1;letter-spacing:-0.053px;font-weight:bold;-webkit-text-stroke:0;">ANSI Colors</span><span class="t" style="left:420.00px;top:184.77px;font-size:14.5px;line-height:19px;color:#e4e3e5;letter-spacing:0.163px;">Foreground</span><span class="t" style="left:417.40px;top:213.47px;font-size:14.5px;line-height:19px;color:#e4e3e5;letter-spacing:0.181px;">Background</span><span class="t" style="left:469.60px;top:242.47px;font-size:14.5px;line-height:19px;color:#e4e3e5;letter-spacing:0.000px;">Bold</span><span class="t" style="left:462.80px;top:271.17px;font-size:14.5px;line-height:19px;color:#e4e3e5;letter-spacing:-0.069px;">Links</span><span class="t" style="left:426.40px;top:301.67px;font-size:14.5px;line-height:19px;color:#e4e3e5;letter-spacing:0.349px;">Brighten bold text</span><span class="t" style="left:409.30px;top:335.87px;font-size:14.5px;line-height:19px;color:#e4e3e5;letter-spacing:0.251px;">Minimum Contrast:</span><span class="t" style="left:650.40px;top:184.77px;font-size:14.5px;line-height:19px;color:#e4e3e5;letter-spacing:0.222px;">Selection</span><span class="t" style="left:624.30px;top:213.47px;font-size:14.5px;line-height:19px;color:#e4e3e5;letter-spacing:0.307px;">Selected text</span><span class="t" style="left:670.40px;top:242.47px;font-size:14.5px;line-height:19px;color:#e4e3e5;letter-spacing:-0.134px;">Badge</span><span class="t" style="left:654.00px;top:271.17px;font-size:14.5px;line-height:19px;color:#e4e3e5;letter-spacing:0.148px;">Tab color</span><span class="t" style="left:613.30px;top:301.67px;font-size:14.5px;line-height:19px;color:#e4e3e5;letter-spacing:0.250px;">Underline color</span><span class="t" style="left:707.40px;top:336.16px;font-size:14.3px;line-height:19px;color:#e4e3e5;letter-spacing:0.000px;">0</span><span class="t" style="left:445.70px;top:405.07px;font-size:14.5px;line-height:19px;color:#e4e3e5;letter-spacing:0.160px;">Cursor</span><span class="t" style="left:416.00px;top:435.67px;font-size:14.5px;line-height:19px;color:#e4e3e5;letter-spacing:0.306px;">Cursor text</span><span class="t" style="left:441.80px;top:467.57px;font-size:14.5px;line-height:19px;color:#e4e3e5;letter-spacing:0.231px;">Cursor Boost:</span><span class="t" style="left:621.00px;top:405.67px;font-size:14.5px;line-height:19px;color:#e4e3e5;letter-spacing:0.218px;">Cursor guide</span><span class="t" style="left:596.80px;top:436.67px;font-size:14.5px;line-height:19px;color:#e4e3e5;letter-spacing:0.301px;">Smart box cursor color</span><span class="t" style="left:707.40px;top:467.76px;font-size:14.3px;line-height:19px;color:#e4e3e5;letter-spacing:0.000px;">0</span><span class="t" style="left:874.50px;top:182.13px;font-size:11.5px;line-height:15px;color:#e4e3e5;letter-spacing:-0.013px;">Normal</span><span class="t" style="left:946.00px;top:182.13px;font-size:11.5px;line-height:15px;color:#e4e3e5;letter-spacing:0.188px;">Bright</span><span class="t" style="left:828.70px;top:203.67px;font-size:14.5px;line-height:19px;color:#e4e3e5;letter-spacing:0.125px;">Black</span><span class="t" style="left:839.70px;top:232.57px;font-size:14.5px;line-height:19px;color:#e4e3e5;letter-spacing:-0.812px;">Red</span><span class="t" style="left:824.70px;top:261.17px;font-size:14.5px;line-height:19px;color:#e4e3e5;letter-spacing:-0.078px;">Green</span><span class="t" style="left:823.40px;top:289.77px;font-size:14.5px;line-height:19px;color:#e4e3e5;letter-spacing:-0.040px;">Yellow</span><span class="t" style="left:836.10px;top:318.77px;font-size:14.5px;line-height:19px;color:#e4e3e5;letter-spacing:-0.133px;">Blue</span><span class="t" style="left:806.90px;top:347.57px;font-size:14.5px;line-height:19px;color:#e4e3e5;letter-spacing:0.217px;">Magenta</span><span class="t" style="left:831.50px;top:376.07px;font-size:14.5px;line-height:19px;color:#e4e3e5;letter-spacing:-0.225px;">Cyan</span><span class="t" style="left:826.90px;top:404.67px;font-size:14.5px;line-height:19px;color:#e4e3e5;letter-spacing:0.184px;">White</span><span class="t" style="left:814.50px;top:467.37px;font-size:14.5px;line-height:19px;color:#f2f2f3;letter-spacing:0.057px;">Color Presets...</span></div>
</div>
</body></html>
